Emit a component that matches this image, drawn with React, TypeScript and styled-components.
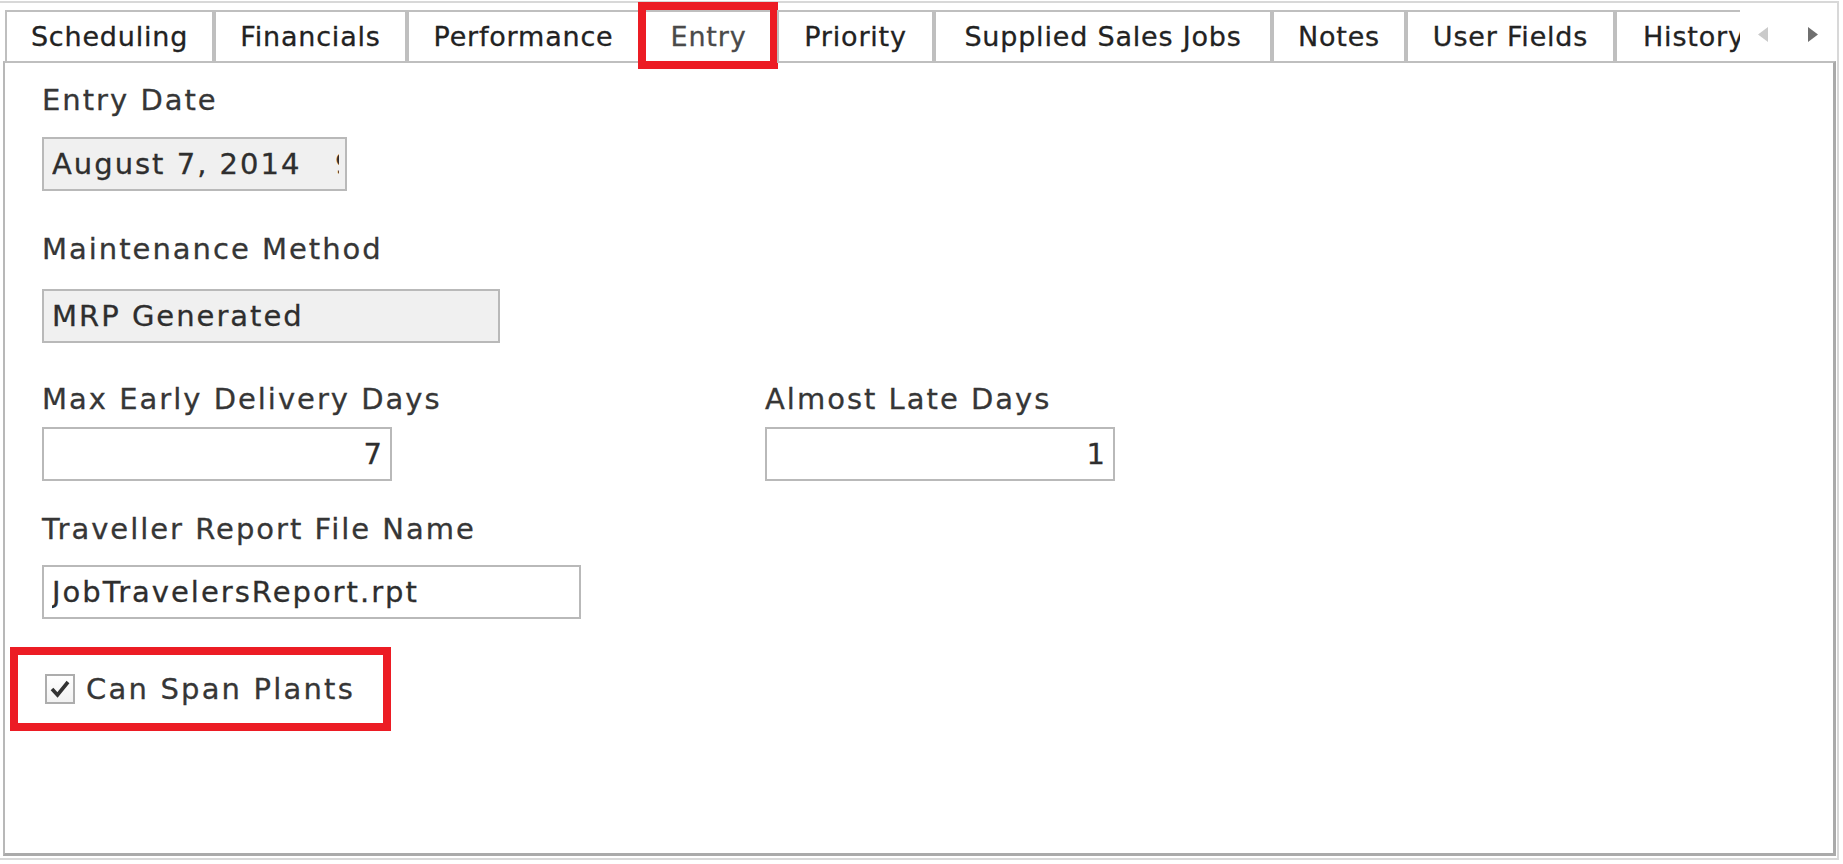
import React from 'react';
import styled, { createGlobalStyle } from 'styled-components';

const GlobalStyle = createGlobalStyle`
  html, body {
    margin: 0;
    padding: 0;
    background: #ffffff;
  }
  body {
    font-family: 'DejaVu Sans', Verdana, sans-serif;
  }
`;

const Frame = styled.div`
  box-sizing: border-box;
  width: 1839px;
  height: 859px;
  margin-top: 1px;
  border-top: 2px solid #d8d8d8;
  border-right: 2px solid #d8d8d8;
  border-bottom: 2px solid #d8d8d8;
  padding-top: 7px;
  display: flex;
  flex-direction: column;
`;

const TabBar = styled.div`
  display: flex;
  height: 53px;
  margin-left: 5px;
  margin-bottom: -2px;
  position: relative;
  z-index: 1;
`;

const Tab = styled.div<{ $width: number; $active?: boolean; $clipped?: boolean }>`
  box-sizing: border-box;
  position: relative;
  flex: none;
  width: ${p => p.$width}px;
  height: 53px;
  display: flex;
  align-items: center;
  justify-content: ${p => (p.$clipped ? 'flex-start' : 'center')};
  padding-left: ${p => (p.$clipped ? '26px' : '0')};
  border: 2px solid #bfbfbf;
  border-right-width: ${p => (p.$clipped ? '0' : '2px')};
  border-bottom-color: ${p => (p.$active ? '#ffffff' : '#bfbfbf')};
  background: #ffffff;
  overflow: ${p => (p.$clipped ? 'hidden' : 'visible')};
  white-space: nowrap;
  font-size: 27px;
  letter-spacing: 0.8px;
  color: ${p => (p.$active ? '#4a4a4a' : '#222222')};
  -webkit-text-stroke: 0.3px ${p => (p.$active ? '#4a4a4a' : '#222222')};
`;

const TabHighlight = styled.div`
  position: absolute;
  top: -10px;
  left: -4px;
  right: -3px;
  bottom: -8px;
  border: 8px solid #ec1c24;
  pointer-events: none;
`;

const ScrollButtons = styled.div`
  flex: 1;
  display: flex;
  align-items: flex-start;
  padding-top: 17px;
  padding-left: 18px;
  gap: 40px;
`;

const Panel = styled.div`
  box-sizing: border-box;
  flex: 1;
  margin: 0 1px 2px 3px;
  border-top: 2px solid #bfbfbf;
  border-left: 2px solid #b8b8b8;
  border-right: 3px solid #aaaaaa;
  border-bottom: 3px solid #aaaaaa;
  padding: 19px 0 0 37px;
  display: flex;
  flex-direction: column;
  align-items: flex-start;
`;

const Field = styled.div<{ $top?: number }>`
  display: flex;
  flex-direction: column;
  margin-top: ${p => p.$top ?? 0}px;
`;

const Label = styled.div<{ $gap: number }>`
  font-size: 29px;
  line-height: 36px;
  letter-spacing: 2px;
  color: #363636;
  -webkit-text-stroke: 0.3px #363636;
  margin-bottom: ${p => p.$gap}px;
  white-space: nowrap;
`;

const TextBox = styled.input<{ $width: number; $readonly?: boolean; $align?: 'left' | 'right' }>`
  box-sizing: border-box;
  width: ${p => p.$width}px;
  height: 54px;
  margin: 0;
  padding: 0 6px 0 8px;
  border: 2px solid #b9b9b9;
  border-radius: 0;
  background: ${p => (p.$readonly ? '#f0f0f0' : '#ffffff')};
  font-family: 'DejaVu Sans', Verdana, sans-serif;
  font-size: 29px;
  letter-spacing: 2px;
  color: #2e2e2e;
  -webkit-text-stroke: 0.3px #2e2e2e;
  text-align: ${p => p.$align ?? 'left'};
  outline: none;
`;

const FieldRow = styled.div<{ $top: number }>`
  display: grid;
  grid-template-columns: 350px 350px;
  column-gap: 373px;
  margin-top: ${p => p.$top}px;
`;

const Highlight = styled.div<{ $top: number }>`
  box-sizing: border-box;
  display: flex;
  align-items: center;
  height: 84px;
  margin-top: ${p => p.$top}px;
  margin-left: -32px;
  padding: 0 28px 0 27px;
  border: 8px solid #ec1c24;
`;

const CheckRow = styled.label`
  display: flex;
  align-items: center;
  gap: 11px;
  font-size: 29px;
  letter-spacing: 2.2px;
  color: #363636;
  -webkit-text-stroke: 0.3px #363636;
  white-space: nowrap;
`;

const CheckBox = styled.span`
  box-sizing: border-box;
  width: 30px;
  height: 30px;
  border: 2px solid #adadad;
  background: linear-gradient(#ffffff, #f2f2f2);
  display: flex;
  align-items: center;
  justify-content: center;
`;

const tabs = [
  { label: 'Scheduling', width: 209 },
  { label: 'Financials', width: 193 },
  { label: 'Performance', width: 233 },
  { label: 'Entry', width: 137, active: true },
  { label: 'Priority', width: 157 },
  { label: 'Supplied Sales Jobs', width: 338 },
  { label: 'Notes', width: 134 },
  { label: 'User Fields', width: 209 },
  { label: 'History', width: 125, clipped: true },
];

export default function App() {
  return (
    <>
      <GlobalStyle />
      <Frame>
        <TabBar>
          {tabs.map(t => (
            <Tab key={t.label} $width={t.width} $active={t.active} $clipped={t.clipped}>
              {t.label}
              {t.active && <TabHighlight />}
            </Tab>
          ))}
          <ScrollButtons>
            <svg width="10" height="15" viewBox="0 0 10 15">
              <polygon points="10,0 0,7.5 10,15" fill="#cacaca" />
            </svg>
            <svg width="10" height="15" viewBox="0 0 10 15">
              <polygon points="0,0 10,7.5 0,15" fill="#6f6f6f" />
            </svg>
          </ScrollButtons>
        </TabBar>
        <Panel>
          <Field>
            <Label $gap={19}>Entry Date</Label>
            <TextBox $width={305} $readonly readOnly value="August 7, 2014   9:14 AM" />
          </Field>
          <Field $top={40}>
            <Label $gap={22}>Maintenance Method</Label>
            <TextBox $width={458} $readonly readOnly value="MRP Generated" />
          </Field>
          <FieldRow $top={38}>
            <Field>
              <Label $gap={10}>Max Early Delivery Days</Label>
              <TextBox $width={350} $align="right" readOnly value="7" />
            </Field>
            <Field>
              <Label $gap={10}>Almost Late Days</Label>
              <TextBox $width={350} $align="right" readOnly value="1" />
            </Field>
          </FieldRow>
          <Field $top={30}>
            <Label $gap={18}>Traveller Report File Name</Label>
            <TextBox $width={539} readOnly value="JobTravelersReport.rpt" />
          </Field>
          <Highlight $top={28}>
            <CheckRow>
              <CheckBox>
                <svg width="22" height="22" viewBox="0 0 22 22">
                  <polyline points="3,11 8.5,17 19,4" fill="none" stroke="#333333" strokeWidth="3.6" strokeLinejoin="miter" />
                </svg>
              </CheckBox>
              Can Span Plants
            </CheckRow>
          </Highlight>
        </Panel>
      </Frame>
    </>
  );
}
